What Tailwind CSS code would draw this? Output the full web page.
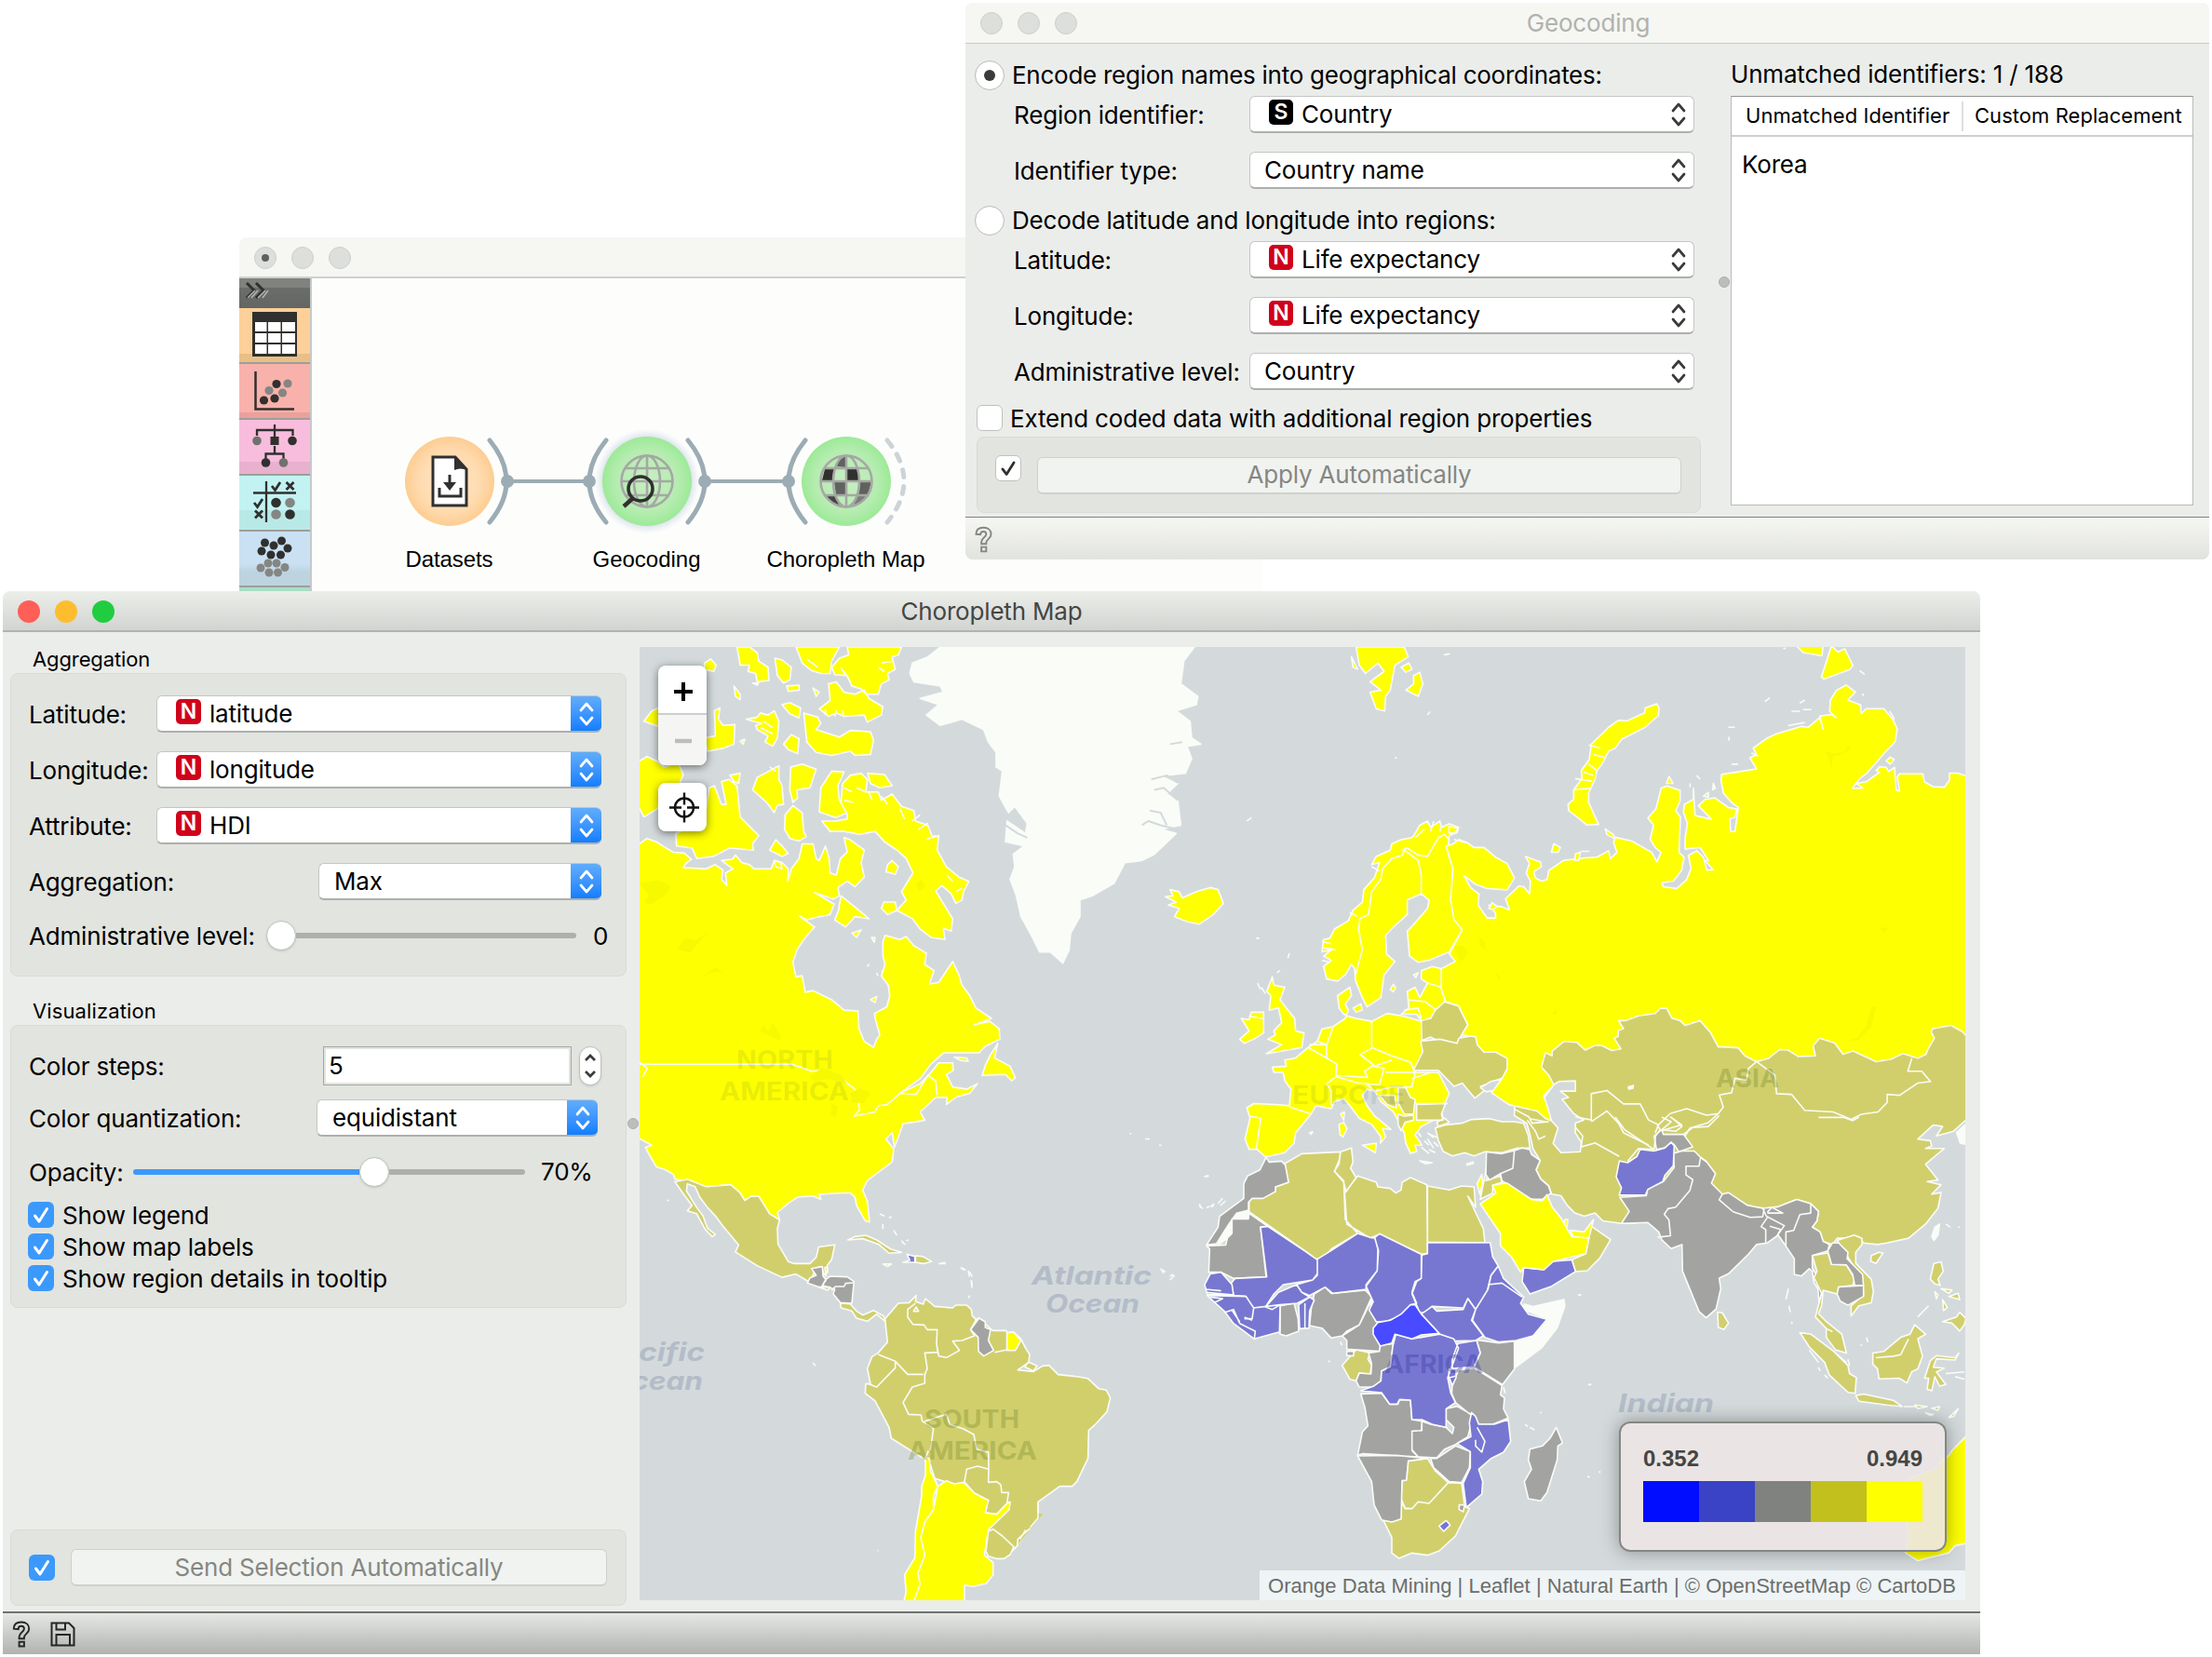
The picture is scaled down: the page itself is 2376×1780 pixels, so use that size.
<!DOCTYPE html>
<html lang="en">
<head>
<meta charset="utf-8">
<title>Choropleth Map</title>
<script src="https://cdn.jsdelivr.net/npm/@tailwindcss/browser@4"></script>
</head>
<body class="relative w-[2376px] h-[1780px] overflow-hidden bg-white text-black font-['Inter',sans-serif] text-[26px] leading-8 tracking-[-0.007em] whitespace-nowrap">

<!-- shared symbols -->
<svg class="absolute w-0 h-0" aria-hidden="true">
  <symbol id="chev" viewBox="0 0 20 28"><path d="M4 10l6-7 6 7M4 18l6 7 6-7" fill="none" stroke="currentColor" stroke-width="2.7" stroke-linecap="round" stroke-linejoin="round"/></symbol>
  <symbol id="check" viewBox="0 0 28 28"><path d="M7.500 15l4.500 6L20.500 7.500" fill="none" stroke="currentColor" stroke-width="3" stroke-linecap="round" stroke-linejoin="round"/></symbol>
  <symbol id="help" viewBox="0 0 20 30"><path d="M1.500 9C1.500 4 5 1.500 10 1.500S18.500 4.500 18.500 9c0 5-5.500 6-5.500 9.500V20H7.500v-2c0-5 5.500-5.500 5.500-9C13 7 12 6 10 6S6.500 7 6.500 9.500zM7.500 23.500H13v5H7.500z" fill="none" stroke="currentColor" stroke-width="2"/></symbol>
</svg>

<!-- workflow window -->
<section class="absolute left-[257px] top-[255px] w-[1100px] h-[382px] flex flex-col rounded-tl-lg overflow-hidden bg-[#fdfefc]">
  <header class="h-[44px] shrink-0 border-b-2 border-[#cfd1ce] bg-[#f6f7f3] flex items-center gap-4 pl-4 pt-px">
    <i class="size-6 rounded-full bg-[#dddfdc] border border-[#cdcfcc] flex items-center justify-center"><i class="size-2 rounded-full bg-[#5f605e]"></i></i>
    <i class="size-6 rounded-full bg-[#dddfdc] border border-[#cdcfcc]"></i>
    <i class="size-6 rounded-full bg-[#dddfdc] border border-[#cdcfcc]"></i>
  </header>
  <div class="flex flex-1">
    <nav class="w-[78px] border-r-2 border-[#c6c9ca] flex flex-col shrink-0">
      <div class="h-8 bg-linear-to-b from-[#80827f] from-30% via-[#6b6d6a] via-32% to-[#646663] shrink-0"><svg class="w-[76px] h-8" viewBox="0 0 76 32" fill="none" stroke-width="3"><path d="M8 5l8 8-8 8M18 5l8 8-8 8" stroke="#2f302e"/><path d="M9 21l8-8M13 21l7-8M20 21l8-8M25 21l6-8" stroke="#b3b4b2" stroke-width="1.500"/></svg></div>
      <div class="h-[60px] shrink-0 border-b-2 border-[#9c9f9a] bg-linear-to-b from-[#fdd099] from-85% to-[#e9bf86] to-85%"><svg class="w-[76px] h-[58px]" viewBox="0 0 76 58"><path d="M14 4h48v48H14z" fill="#30302e"/><path d="M17 15h12.500v10H17zM31 15h13.500v10H31zM46 15h14v10H46zM17 27h12.500v10H17zM31 27h13.500v10H31zM46 27h14v10H46zM17 39h12.500v10H17zM31 39h13.500v10H31zM46 39h14v10H46z" fill="#fff"/></svg></div>
      <div class="h-[60px] shrink-0 border-b-2 border-[#9c9f9a] bg-linear-to-b from-[#f9b1ab] from-90% to-[#eaa19c] to-90%"><svg class="w-[76px] h-[58px]" viewBox="0 0 76 58"><path d="M17.500 8v40.500H59" fill="none" stroke="#30302e" stroke-width="2.500"/><g fill="#30302e"><circle cx="26.500" cy="39" r="4.600"/><circle cx="38" cy="37" r="4.600"/><circle cx="40" cy="21.500" r="4.600"/></g><g fill="#858683"><circle cx="32" cy="28.500" r="4.600"/><circle cx="46.500" cy="31" r="4.600"/><circle cx="52" cy="21" r="4.600"/></g></svg></div>
      <div class="h-[60px] shrink-0 border-b-2 border-[#9c9f9a] bg-linear-to-b from-[#f8bddc] from-78% to-[#e8b1cd] to-78%"><svg class="w-[76px] h-[58px]" viewBox="0 0 76 58"><path d="M38 5v15M19 17v-6h38.500v6M38 28v9M28.500 42v-5.500h19V42" fill="none" stroke="#30302e" stroke-width="2.300"/><path d="M33.500 18h9v9h-9z" fill="#30302e"/><g fill="#30302e"><circle cx="57" cy="22.500" r="4.800"/><circle cx="28.500" cy="46" r="4.800"/></g><g fill="#70716e"><circle cx="19" cy="22.500" r="4.800"/><circle cx="47.500" cy="46" r="4.800"/></g></svg></div>
      <div class="h-[60px] shrink-0 border-b-2 border-[#9c9f9a] bg-linear-to-b from-[#c2f3f2] from-64% to-[#b9e9e7] to-64%"><svg class="w-[76px] h-[58px]" viewBox="0 0 76 58"><path d="M15 18.500h46M29 6v44" fill="none" stroke="#30302e" stroke-width="2.300"/><path d="M35 11l3.500 4.500L44 7M16 29l3.500 4.500L25 25M50.500 7l8 8M58.500 7l-8 8M17 37.500l8 8M25 37.500l-8 8" fill="none" stroke="#30302e" stroke-width="2.800"/><g fill="#30302e"><circle cx="39.500" cy="29" r="5.300"/><circle cx="54.500" cy="41.500" r="5.300"/></g><g fill="#858683"><circle cx="54.500" cy="29" r="5.300"/><circle cx="39.500" cy="41.500" r="5.300"/></g></svg></div>
      <div class="h-[60px] shrink-0 border-b-2 border-[#9c9f9a] bg-linear-to-b from-[#c9e1f3] from-60% to-[#bdd3e0] to-75%"><svg class="w-[76px] h-[58px]" viewBox="0 0 76 58"><g fill="#30302e"><circle cx="27.500" cy="12" r="4.500"/><circle cx="45.500" cy="10" r="4.500"/><circle cx="37" cy="15" r="4.500"/><circle cx="24" cy="21" r="4.500"/><circle cx="52" cy="18" r="4.500"/><circle cx="34" cy="25" r="4.500"/><circle cx="44.500" cy="25" r="4.500"/></g><g fill="#858683"><circle cx="31" cy="34" r="4.500"/><circle cx="40" cy="34" r="4.500"/><circle cx="23" cy="39" r="4.500"/><circle cx="49" cy="38.500" r="4.500"/><circle cx="32" cy="44" r="4.500"/><circle cx="41.500" cy="44" r="4.500"/></g></svg></div>
      <div class="flex-1 bg-[#a8dec7]"></div>
    </nav>
    <svg class="w-[1020px] h-[338px]" viewBox="335 299 1020 338">
      <defs>
        <radialGradient id="og"><stop offset="0" stop-color="#ffe9cf"/><stop offset=".7" stop-color="#ffdaae"/><stop offset="1" stop-color="#fdcd92"/></radialGradient>
        <radialGradient id="gg"><stop offset="0" stop-color="#c9eec4"/><stop offset=".7" stop-color="#b5ecb0"/><stop offset="1" stop-color="#9cea97"/></radialGradient>
        <radialGradient id="glow"><stop offset=".8" stop-color="#d3dbe6"/><stop offset="1" stop-color="#e6ebf2" stop-opacity="0"/></radialGradient>
        <g id="globe" fill="none" stroke="#a5a8a3" stroke-width="2.600"><circle r="27.500"/><ellipse rx="14" ry="27.500"/><path d="M0-27.500v55M-27.500 0h55M-24-14h48M-24 15h48"/></g>
      </defs>
      <g fill="none" stroke="#9cacb4" stroke-width="5" stroke-linecap="round"><path d="M526 473q36 44 0 88M651 473q-36 44 0 88M739 473q36 44 0 88M865 473q-36 44 0 88"/><path d="M544 517h89M757 517h90" stroke-width="4"/><path d="M953 473q36 44 0 88" stroke="#cdd3d6" stroke-dasharray="8 10"/></g>
      <g fill="#9cacb4"><circle cx="545" cy="517" r="7"/><circle cx="633" cy="517" r="7"/><circle cx="757" cy="517" r="7"/><circle cx="847" cy="517" r="7"/></g>
      <circle cx="695" cy="517" r="57" fill="url(#glow)"/>
      <circle cx="483" cy="517" r="48" fill="url(#og)"/><circle cx="695" cy="517" r="48" fill="url(#gg)"/><circle cx="909" cy="517" r="48" fill="url(#gg)"/>
      <path d="M465 491h24l12 13v39h-36z" fill="#fff" stroke="#30302e" stroke-width="3"/><path d="M488 490l14 15q-8-3-14 0z" fill="#30302e"/><path d="M483 510v10M472 524v9h23v-9" fill="none" stroke="#30302e" stroke-width="3"/><path d="M476 518h14l-7 9z" fill="#30302e"/>
      <use href="#globe" x="695" y="517"/><circle cx="688" cy="525" r="13" fill="none" stroke="#30302e" stroke-width="3.600"/><path d="M680 535l-10 9" stroke="#30302e" stroke-width="4.500"/>
      <path d="M886 504l6-2h5l-2 14h-12zM910 502h11l2 14h-13z" fill="#30302e"/><path d="M897 501l6-10 6-1v12zM896 518h13v13h-11zM923 518h13l-4 14h-10z" fill="#60625e"/><path d="M888 533h10l6 11q-11-2-16-11z" fill="#454643"/><path d="M921 533h9q-5 9-14 11z" fill="#7c7e7a"/>
      <use href="#globe" x="909" y="517"/>
      <g class="font-['Liberation_Sans',sans-serif] text-[24px] tracking-normal" text-anchor="middle"><text x="482.500" y="609" textLength="94">Datasets</text><text x="694.500" y="609" textLength="116">Geocoding</text><text x="908.500" y="609" textLength="170">Choropleth Map</text></g>
    </svg>
  </div>
</section>

<!-- geocoding window -->
<section class="absolute left-[1037px] top-[3px] w-[1336px] h-[598px] flex flex-col rounded-lg overflow-hidden bg-[#ebedea]">
  <header class="relative h-[44px] shrink-0 border-b border-[#c9cbc8] bg-[#f6f7f3] flex items-center gap-4 pl-4 pt-px">
    <i class="size-6 rounded-full bg-[#dddfdc] border border-[#cdcfcc]"></i><i class="size-6 rounded-full bg-[#dddfdc] border border-[#cdcfcc]"></i><i class="size-6 rounded-full bg-[#dddfdc] border border-[#cdcfcc]"></i>
    <h1 class="flex-1 text-center pr-[150px] pl-4 text-[#b0b2af]">Geocoding</h1>
  </header>
  <div class="flex h-[508px] shrink-0">
    <div class="w-[790px] shrink-0 pl-3">
      <div class="mt-[18px] h-8 flex items-center -ml-[2px]"><i class="size-8 rounded-full bg-white border border-[#b9bbb8] flex items-center justify-center"><i class="size-3 rounded-full bg-[#3b3c3a]"></i></i><span class="ml-[8px] -mt-px tracking-[-0.01em]">Encode region names into geographical coordinates:</span></div>
      <div class="mt-[6px] h-10 flex items-center pl-10"><span class="w-[253px] pt-[2px]">Region identifier:</span><div class="w-[478px] h-10 rounded-md bg-white border border-[#c4c6c3] border-b-2 border-b-[#adafac] flex items-center pl-5 pr-[6px]"><b class="w-[26px] h-[27px] rounded-[5px] bg-black text-white text-[23px] leading-[27px] text-center font-semibold -mt-1">S</b><span class="ml-[9px] flex-1">Country</span><svg class="w-5 h-8 text-[#3b3c3a]"><use href="#chev"/></svg></div></div>
      <div class="mt-5 h-10 flex items-center pl-10"><span class="w-[253px] pt-[2px]">Identifier type:</span><div class="w-[478px] h-10 rounded-md bg-white border border-[#c4c6c3] border-b-2 border-b-[#adafac] flex items-center pl-[15px] pr-[6px]"><span class="flex-1">Country name</span><svg class="w-5 h-8 text-[#3b3c3a]"><use href="#chev"/></svg></div></div>
      <div class="mt-[18px] h-8 flex items-center -ml-[2px]"><i class="size-8 rounded-full bg-white border border-[#b9bbb8]"></i><span class="ml-[8px] -mt-px">Decode latitude and longitude into regions:</span></div>
      <div class="mt-[6px] h-10 flex items-center pl-10"><span class="w-[253px] pt-[2px]">Latitude:</span><div class="w-[478px] h-10 rounded-md bg-white border border-[#c4c6c3] border-b-2 border-b-[#adafac] flex items-center pl-5 pr-[6px]"><b class="w-[26px] h-[27px] rounded-[5px] bg-[#d0021b] text-white text-[23px] leading-[27px] text-center font-semibold -mt-1">N</b><span class="ml-[9px] flex-1">Life expectancy</span><svg class="w-5 h-8 text-[#3b3c3a]"><use href="#chev"/></svg></div></div>
      <div class="mt-5 h-10 flex items-center pl-10"><span class="w-[253px] pt-[2px]">Longitude:</span><div class="w-[478px] h-10 rounded-md bg-white border border-[#c4c6c3] border-b-2 border-b-[#adafac] flex items-center pl-5 pr-[6px]"><b class="w-[26px] h-[27px] rounded-[5px] bg-[#d0021b] text-white text-[23px] leading-[27px] text-center font-semibold -mt-1">N</b><span class="ml-[9px] flex-1">Life expectancy</span><svg class="w-5 h-8 text-[#3b3c3a]"><use href="#chev"/></svg></div></div>
      <div class="mt-5 h-10 flex items-center pl-10"><span class="w-[253px] pt-[2px]">Administrative level:</span><div class="w-[478px] h-10 rounded-md bg-white border border-[#c4c6c3] border-b-2 border-b-[#adafac] flex items-center pl-[15px] pr-[6px]"><span class="flex-1">Country</span><svg class="w-5 h-8 text-[#3b3c3a]"><use href="#chev"/></svg></div></div>
      <div class="mt-4 h-7 flex items-center"><i class="size-7 rounded-md bg-white border border-[#bfc1be]"></i><span class="ml-[8px] pt-px">Extend coded data with additional region properties</span></div>
      <div class="mt-[6px] h-[82px] w-[778px] rounded-lg border border-[#d9dbd8] bg-[#e2e4df] flex items-start pl-[19px]"><i class="mt-[19px] size-7 rounded-md bg-white border border-[#bfc1be] text-[#2f302e]"><svg class="size-[26px]"><use href="#check"/></svg></i><div class="mt-[21px] ml-[17px] w-[692px] h-10 rounded-md bg-[#f1f3f0] border border-[#cfd1ce] border-b-2 text-center leading-9 text-[#858783]">Apply Automatically</div></div>
    </div>
    <div class="w-[32px] shrink-0 pl-[19px] pt-[250px]"><i class="block size-3 rounded-full bg-[#bcbebb] border border-[#adafac]"></i></div>
    <div class="w-[497px]">
      <div class="mt-[17px] h-8">Unmatched identifiers: 1 / 188</div>
      <div class="mt-[7px] h-[440px] w-[497px] bg-white border border-[#b9bbb8] border-t-[#929491]">
        <div class="h-[43px] border-b-2 border-[#cdcfcc] flex items-center text-[22px] tracking-[0.002em]"><span class="w-[249px] h-8 pl-[15px] border-r-2 border-[#dddfdc] leading-[30px]">Unmatched Identifier</span><span class="pl-[12px] h-8 leading-[30px]">Custom Replacement</span></div>
        <div class="mt-[14px] pl-[11px]">Korea</div>
      </div>
    </div>
  </div>
  <footer class="flex-1 border-t border-[#7f817e] bg-linear-to-b from-[#f6f7f3] to-[#e1e3de] pl-[10px] pt-[9px] text-[#858783]"><svg class="w-[19px] h-[29px]"><use href="#help"/></svg></footer>
</section>

<!-- choropleth window -->
<section class="absolute left-[3px] top-[635px] w-[2124px] h-[1142px] flex flex-col rounded-t-lg overflow-hidden bg-[#ebedea]">
  <header class="h-[44px] shrink-0 border-b-2 border-[#b1b3b0] bg-linear-to-b from-[#eceeea] to-[#d2d4d1] flex items-center gap-4 pl-4 pt-[2px]">
    <i class="size-6 rounded-full bg-[#fe5f57]"></i><i class="size-6 rounded-full bg-[#febd2e]"></i><i class="size-6 rounded-full bg-[#20cd40]"></i>
    <h1 class="flex-1 text-center pr-[148px] pl-3 text-[#454643]">Choropleth Map</h1>
  </header>
  <div class="flex h-[1052px] shrink-0">
    <div class="w-[670px] shrink-0 pl-2">
      <h2 class="mt-[14px] pl-[24px] text-[22px] leading-[30px] tracking-[-0.005em]">Aggregation</h2>
      <div class="w-[662px] h-[326px] rounded-lg border border-[#d9dbd8] bg-[#e2e4df] pt-[23px] pl-[19px]">
        <div class="h-10 flex items-center"><span class="w-[137px] pt-[2px]">Latitude:</span><div class="w-[478px] h-10 rounded-md bg-white border border-r-0 border-[#c4c6c3] border-b-2 border-b-[#adafac] flex items-center pl-[20px] overflow-hidden"><b class="w-[27px] h-[27px] rounded-[5px] bg-[#d0021b] text-white text-[23px] leading-[27px] text-center font-semibold -mt-1">N</b><span class="ml-[9px] flex-1">latitude</span><i class="w-[33px] h-10 bg-linear-to-b from-[#62aefb] to-[#067bff] text-white flex items-center justify-center"><svg class="w-5 h-8"><use href="#chev"/></svg></i></div></div>
        <div class="mt-5 h-10 flex items-center"><span class="w-[137px] pt-[2px]">Longitude:</span><div class="w-[478px] h-10 rounded-md bg-white border border-r-0 border-[#c4c6c3] border-b-2 border-b-[#adafac] flex items-center pl-[20px] overflow-hidden"><b class="w-[27px] h-[27px] rounded-[5px] bg-[#d0021b] text-white text-[23px] leading-[27px] text-center font-semibold -mt-1">N</b><span class="ml-[9px] flex-1">longitude</span><i class="w-[33px] h-10 bg-linear-to-b from-[#62aefb] to-[#067bff] text-white flex items-center justify-center"><svg class="w-5 h-8"><use href="#chev"/></svg></i></div></div>
        <div class="mt-5 h-10 flex items-center"><span class="w-[137px] pt-[2px]">Attribute:</span><div class="w-[478px] h-10 rounded-md bg-white border border-r-0 border-[#c4c6c3] border-b-2 border-b-[#adafac] flex items-center pl-[20px] overflow-hidden"><b class="w-[27px] h-[27px] rounded-[5px] bg-[#d0021b] text-white text-[23px] leading-[27px] text-center font-semibold -mt-1">N</b><span class="ml-[9px] flex-1">HDI</span><i class="w-[33px] h-10 bg-linear-to-b from-[#62aefb] to-[#067bff] text-white flex items-center justify-center"><svg class="w-5 h-8"><use href="#chev"/></svg></i></div></div>
        <div class="mt-5 h-10 flex items-center"><span class="w-[311px] pt-[2px]">Aggregation:</span><div class="w-[304px] h-10 rounded-md bg-white border border-r-0 border-[#c4c6c3] border-b-2 border-b-[#adafac] flex items-center pl-4 overflow-hidden"><span class="flex-1">Max</span><i class="w-[33px] h-10 bg-linear-to-b from-[#62aefb] to-[#067bff] text-white flex items-center justify-center"><svg class="w-5 h-8"><use href="#chev"/></svg></i></div></div>
        <div class="mt-[22px] h-8 flex items-center"><span class="w-[255px] pt-[2px]">Administrative level:</span><i class="size-8 rounded-full bg-white border border-[#bfc1be] shadow-sm"></i><i class="w-[301px] h-[6px] rounded-r-full bg-[#aeb0ad]"></i><span class="ml-[18px] pt-px">0</span></div>
      </div>
      <h2 class="mt-[22px] pl-[24px] text-[22px] leading-[30px] tracking-[0.005em]">Visualization</h2>
      <div class="w-[662px] h-[304px] rounded-lg border border-[#d9dbd8] bg-[#e2e4df] pt-[22px] pl-[19px]">
        <div class="h-[42px] flex items-center"><span class="w-[316px] pt-[2px]">Color steps:</span><div class="w-[267px] h-[42px] bg-white border border-[#a5a7a4] ring-2 ring-inset ring-[#e2e4df] pl-[5px] leading-[40px]">5</div><i class="ml-2 w-6 h-[42px] rounded-full bg-white border border-[#bfc1be] text-[#3b3c3a] flex items-center justify-center shadow-sm"><svg class="w-4 h-8" viewBox="0 0 16 32" fill="none" stroke="currentColor" stroke-width="2.700"><path d="M3 10l5-5 5 5M3 22l5 5 5-5"/></svg></i></div>
        <div class="mt-[15px] h-10 flex items-center"><span class="w-[309px] pt-[2px]">Color quantization:</span><div class="w-[302px] h-10 rounded-md bg-white border border-r-0 border-[#c4c6c3] border-b-2 border-b-[#adafac] flex items-center pl-4 overflow-hidden"><span class="flex-1">equidistant</span><i class="w-[33px] h-10 bg-linear-to-b from-[#62aefb] to-[#067bff] text-white flex items-center justify-center"><svg class="w-5 h-8"><use href="#chev"/></svg></i></div></div>
        <div class="mt-[22px] h-8 flex items-center"><span class="w-[112px] pt-px">Opacity:</span><i class="w-[243px] h-[6px] rounded-l-full bg-[#3b99fc]"></i><i class="size-8 rounded-full bg-white border border-[#bfc1be] shadow-sm"></i><i class="w-[146px] h-[6px] rounded-r-full bg-[#aeb0ad]"></i><span class="ml-[17px]">70%</span></div>
        <div class="mt-[16px] -ml-px h-7 flex items-center"><i class="size-7 rounded-md bg-[#3b99fc] text-white"><svg class="size-7"><use href="#check"/></svg></i><span class="ml-[9px] pt-px">Show legend</span></div>
        <div class="mt-[6px] -ml-px h-7 flex items-center"><i class="size-7 rounded-md bg-[#3b99fc] text-white"><svg class="size-7"><use href="#check"/></svg></i><span class="ml-[9px] pt-px">Show map labels</span></div>
        <div class="mt-[6px] -ml-px h-7 flex items-center"><i class="size-7 rounded-md bg-[#3b99fc] text-white"><svg class="size-7"><use href="#check"/></svg></i><span class="ml-[9px] pt-px">Show region details in tooltip</span></div>
      </div>
      <div class="mt-[238px] w-[662px] h-[82px] rounded-lg border border-[#d9dbd8] bg-[#e2e4df] flex items-center pl-[19px]"><i class="size-7 rounded-md bg-[#3b99fc] text-white"><svg class="size-7"><use href="#check"/></svg></i><div class="ml-[17px] w-[576px] h-10 rounded-md bg-[#f1f3f0] border border-[#cfd1ce] border-b-2 text-center leading-[38px] text-[#858783]">Send Selection Automatically</div></div>
    </div>
    <div class="w-[14px] shrink-0 pl-px pt-[522px]"><i class="block size-3 rounded-full bg-[#bcbebb] border border-[#adafac]"></i></div>
    <main class="relative mt-4 w-[1424px] h-[1024px] overflow-hidden bg-[#d4dadc]">
      <svg class="w-[1424px] h-[1024px] [&_path]:[vector-effect:non-scaling-stroke]" viewBox="687 695 1424 1024" stroke="#fafcf8" stroke-width="1.600" stroke-linejoin="round">
        <!-- Greenland -->
        <g transform="translate(680 690) scale(.333333 .446429)">
          <path fill="#fafcf8" d="M1010,0 950,35 900,50 892,75 905,95 990,105 1000,120 925,135 985,150 945,175 990,200 1060,185 1130,210 1145,240 1170,265 1170,300 1190,310 1180,370 1210,410 1230,395 1270,435 1265,460 1205,430 1200,480 1260,490 1225,510 1230,540 1215,570 1235,610 1250,660 1280,700 1310,745 1345,745 1385,772 1405,740 1410,700 1440,660 1440,620 1480,610 1550,580 1585,530 1640,525 1680,510 1750,460 1700,450 1765,440 1755,380 1720,365 1755,340 1700,322 1780,315 1800,280 1785,250 1830,245 1800,230 1795,190 1750,165 1815,150 1820,130 1765,100 1775,45 1820,0z"/>
          <path fill="none" stroke="#d4dadc" stroke-width="2" d="M1640,440 1660,430 1700,440 1765,452M1665,405 1700,410 1720,440M1680,355 1710,350 1755,380M1670,330 1720,320 1755,338M1730,245 1770,240M1200,440 1240,460 1270,470"/>
        </g>
        <!-- Canada and United States -->
        <g transform="translate(680 690) scale(.333333 .446429)" fill="#feff00">
          <path d="M10,490 45,472 75,480 100,492 130,505 165,507 188,522 170,532 162,542 235,545 265,535 290,548 285,570 302,585 298,555 322,545 285,525 320,522 330,512 350,530 375,535 390,545 445,545 455,525 480,530 500,545 498,575 510,545 535,520 545,485 580,485 590,520 600,525 620,490 632,520 635,555 655,560 668,520 690,505 680,470 700,475 745,500 735,530 745,565 715,588 690,575 660,590 665,610 645,618 585,602 648,630 635,655 590,662 560,668 535,658 585,685 555,710 528,740 515,770 525,805 545,802 555,842 580,838 640,860 680,885 725,887 728,930 745,960 775,975 785,955 795,945 780,905 778,893 818,877 827,850 822,825 800,803 812,775 805,755 805,720 812,705 860,715 880,708 905,730 945,748 940,775 970,790 955,822 985,818 1030,768 1050,800 1060,825 1085,850 1105,880 1155,905 1100,920 1150,912 1180,930 1182,955 1135,972 1115,988 1000,988 960,1015 925,1050 860,1085 925,1062 960,1035 985,1012 1030,1012 1032,1030 1010,1040 1030,1070 1075,1075 1110,1062 1085,1085 1040,1095 1010,1112 1012,1095 975,1095 925,1130 940,1150 900,1155 870,1158 855,1190 842,1215 835,1180 815,1195 840,1220 835,1250 800,1270 755,1295 740,1318 755,1345 762,1395 748,1392 720,1355 715,1335 700,1325 675,1325 600,1328 605,1340 580,1332 530,1335 500,1350 465,1372 472,1390 440,1375 405,1333 380,1333 360,1343 345,1325 315,1305 235,1310 175,1295 135,1292 130,1280 100,1268 75,1262 50,1230 40,1215 60,1210 10,1190z"/>
          <path fill="none" d="M21,1015 510,1015 550,1025 575,1032 625,1030 680,1055 722,1080 730,1125 712,1140 780,1130 790,1115 820,1112 860,1085 912,1088 950,1042 975,1055 980,1090M21,1010l25,15-15,20"/>
          <path d="M1175,965 1165,1000 1190,1010 1215,1020 1232,1048 1220,1055 1200,1040 1125,1042 1135,1018 1150,995zM1035,998 1075,1000 1080,1008 1055,1006z"/>
          <path d="M10,290 45,275 75,285 100,300 145,290 162,318 150,340 90,345 80,400 35,420 10,385zM60,165 90,155 90,205 35,190zM230,50 250,40 268,55 260,70 230,65zM262,165 280,158 275,185 290,200 328,198 325,245 290,255 240,262 230,230 265,225zM245,350 262,345 285,390 300,390 285,335 310,330 335,345 345,420 405,465 385,485 388,500 310,495 260,515 205,520 190,495 140,490 138,460 230,430zM312,320 345,315 340,340 325,335zM345,238l15,-5 -5,12z"/>
          <path d="M335,11 375,11 400,25 405,45 435,60 438,92 400,95 395,75 370,70 375,55 345,55zM457,38 480,42 510,60 505,90 485,98 465,80zM525,11 665,11 640,45 635,75 605,75 575,68 545,50zM325,105 345,125 345,138 330,130zM495,105 535,103 535,115 500,118zM580,110 600,120 590,130zM385,98l20,0 -5,5z"/>
          <path d="M640,60 665,38 695,30 690,11 865,11 855,30 835,35 845,65 820,75 825,90 800,100 790,125 750,125 735,112 705,105 690,80 650,78zM600,160 635,140 630,100 655,95 680,120 715,125 745,115 760,135 805,155 800,175 755,192 745,175 680,178 655,170 630,178zM480,150 505,145 540,158 535,182 505,172zM550,170 595,180 605,195 590,210 665,228 700,212 765,215 775,235 765,270 715,272 700,262 640,272 590,265 560,240z"/>
          <path d="M365,185 400,180 410,170 435,175 455,165 470,190 465,230 450,250 425,240 435,225 400,210 395,200 415,195 385,190zM485,245 510,222 535,232 530,268 500,258zM400,325 470,297 470,330 480,345 485,390 465,392 455,410 430,385 385,355zM508,300 545,293 590,305 570,350 528,355 530,375 515,385 505,355zM490,415 515,393 545,410 550,455 558,468 535,478 505,472 488,450zM440,500 460,475 480,490 500,508 480,515zM455,525 475,530 480,545 460,540z"/>
          <path d="M605,350 640,310 680,312 660,345 665,380 688,410 655,422 600,408zM608,430 650,430 690,425 690,415 670,385 675,340 700,320 735,315 755,330 750,360 790,360 800,380 835,365 865,395 905,405 910,430 950,440 965,470 985,465 980,500 1010,540 1050,565 1082,575 1065,600 1060,620 1040,628 1025,605 995,585 975,598 1030,665 1025,695 1000,688 1005,715 960,710 925,690 900,665 850,645 880,620 865,600 902,555 880,520 850,500 810,480 780,455 730,462 680,455 635,455zM755,315 810,318 835,345 795,350 765,340zM820,535 835,525 855,540 845,558 815,552zM808,625 845,625 850,645 820,655 800,640zM670,610 720,640 760,665 715,660 685,685 650,668 662,645zM705,700 735,692 720,710zM768,710l12,0 -3,12zM765,860l20,-8 -5,15z"/>
          <path fill="none" d="M560,40l35,20M670,60l15,20M700,95l-20,-25M760,360l10,20M720,350l30,10M680,380l30,5M680,350l25,10M800,370l20,20M860,400l15,25M900,430l25,-15M920,450l30,-15M945,475l30,-10M620,175l0,-15M650,178l5,-15M680,180l-5,-15M800,50l40,-5M810,70l-20,-10M410,205l40,15M420,190l30,15M440,300l20,10M1040,600l20,-8M1010,560l20,15"/>
          <path fill="#d1cf6c" d="M135,1298 175,1292 235,1310 315,1305 345,1325 360,1343 380,1333 405,1333 440,1375 472,1390 465,1410 467,1448 500,1490 520,1495 570,1495 590,1480 598,1455 650,1450 640,1485 625,1500 628,1515 615,1522 608,1502 590,1505 570,1540 525,1520 480,1528 400,1500 330,1467 340,1450 290,1405 265,1380 240,1360 215,1335 200,1310 175,1303 172,1320 205,1360 225,1380 240,1410 265,1425 255,1430 232,1412 205,1375 175,1368 190,1355 160,1325zM692,1438 715,1430 750,1427 785,1438 830,1460 865,1468 825,1470 790,1448 740,1435zM910,1476 935,1478 962,1490 935,1495 910,1492zM805,1496 832,1496 820,1502z"/>
          <path fill="#7777d2" d="M882,1472 908,1478 908,1492 870,1492 892,1487z"/>
          <path fill="none" d="M795,1375l15,6M805,1400v12M825,1385l8,-3M840,1415l10,12M865,1440l12,10M880,1440l8,-2M985,1495h22M1060,1505l12,6M1085,1515l8,12M1090,1540l3,8M110,1343h6M755,780l6,-6M785,795l4,8M800,790h5"/>
          <g fill="#f7f900" stroke="none"><path d="M21,580l60,-8 40,15 -15,20 -50,25 -20,-8 15,-15z M140,740l30,-30 30,8 40,-20 -35,30 -20,18zM410,935l10,-15 15,15 15,-20 25,30 0,15zM220,805l45,-22 25,8 -40,5zM570,1045l40,-22 60,18 20,22 -60,-12 -45,6zM640,1110l20,5 -5,28 -18,-5zM700,1085l30,-12 35,10 -20,25 -40,0zM910,580l20,-8 15,15 -25,12z"/></g>
        </g>
        <!-- Central and South America -->
        <g transform="translate(860 1340) scale(.333333)" fill="#d1cf6c">
          <path fill="#a3a4a1" d="M35,68 70,62 72,92 82,105 65,130 22,115 30,98 50,90zM82,102 95,93 150,95 172,110 165,180 128,178 105,150 110,135 70,122z"/><path fill="none" d="M100,138l12,-12 28,0 5,-10 25,-2"/>
          <path d="M60,128l35,0 -8,10zM128,180 160,182 180,205 200,218 235,203 268,222 272,238 245,215 215,238 180,228 165,205 130,195zM78,65l8,0 -5,28z"/>
          <path d="M272,230 315,180 350,178 372,155 370,175 395,183 402,165 432,190 490,195 500,186 535,186 550,200 553,220 565,232 575,228 612,262 620,268 662,268 665,275 685,272 710,295 725,325 738,345 735,370 700,395 750,400 780,382 800,380 830,410 880,415 925,422 960,455 985,460 998,485 987,530 950,570 928,590 926,680 890,755 875,770 835,770 765,820 765,872 735,910 690,970 655,1003 605,995 595,960 600,900 668,822 420,740 400,683 292,615 285,580 240,495 208,470 210,440 225,440 215,390 230,352 250,340 280,305 275,262z"/>
          <path fill="none" d="M370,180 345,200 345,225 362,248 398,250 408,265 440,265 438,310 445,350 470,355 512,332 490,302 520,300 560,285 548,265 567,230M438,310l4,28 -42,2 8,50 -8,20 0,28 -40,12 -30,50 18,38 40,2 4,20 36,24 -10,70M250,345l55,22 40,42 50,0M305,370l0,18 -60,62 -25,-10M400,560 470,538 480,570 525,585 558,603 567,650 605,660 606,715M412,655 400,683M418,700 440,768M372,192l8,14 -16,0zM665,275v55l-40,8"/>
          <path d="M610,905 668,822 780,860 690,970z" stroke="none"/>
          <path d="M605,915 620,908 650,930 687,965 675,990 655,1003 630,1003 605,995 597,980zM528,755 535,715 570,705 606,715 605,757 632,755 645,765 648,790 670,790 665,825 632,860 595,855 605,815 560,792z"/>
          <path fill="none" d="M740,905 700,940 698,962 687,972M765,820v52l-25,30"/>
          <path d="M722,385 735,370 762,382 750,398z"/>
          <path fill="#a3a4a1" d="M575,228 595,240 595,258 612,265 605,300 622,332 590,350 573,335 572,290 548,265z"/>
          <path fill="#feff00" d="M665,275 685,272 710,300 692,332 665,332zM402,678 415,680 418,720 442,770 428,800 428,845 400,885 387,935 400,992 378,1050 385,1085 365,1140 333,1140 340,1110 335,1055 368,1000 370,915 390,800 390,770 402,735zM442,770 470,752 495,762 525,757 560,792 605,815 595,855 632,860 665,825 675,820 672,845 605,910 592,992 620,1015 620,1055 598,1083 555,1093 528,1088 528,1140 365,1140 385,1085 378,1050 400,992 387,935 400,885 428,845z"/>
          <g fill="none" stroke="#fafcf8"><path d="M515,65l12,8M540,75l4,20M550,105l2,25M545,155l-4,8M455,50h12M40,372l8,10M1160,68l10,15M1190,105l15,-15M247,977h3M725,910l-18,30"/></g>
        </g>
        <!-- Asia -->
        <g transform="translate(1680 1200) scale(.333333 .33801)">
          <path fill="#d1cf6c" d="M-150,-400 -160,-5 -120,20 -110,55 -100,100 -77,138 -90,168 -75,197 -50,217 -40,245 -10,250 10,280 35,305 65,315 100,305 125,330 185,338 230,338 300,250 450,250 525,245 600,285 650,290 690,285 750,262 795,275 820,300 815,330 800,350 825,365 835,395 865,405 880,385 910,385 950,380 965,400 1010,405 1040,400 1110,385 1165,340 1205,290 1215,240 1185,245 1215,215 1170,205 1205,200 1165,150 1215,108 1225,100 1165,100 1185,92 1180,75 1140,70 1190,25 1220,30 1200,60 1255,45 1300,5 1300,-400z"/>
          <path fill="#fafcf8" stroke="none" d="M1262,48 1300,15 1300,90 1275,85z"/>
          <path fill="#a3a4a1" d="M185,338 210,300 180,255 265,250 270,225 320,205 355,160 352,115 380,108 420,108 440,128 460,143 488,180 475,210 510,245 530,240 590,280 640,290 690,285 750,262 795,275 820,300 815,330 800,350 825,365 835,395 855,405 850,425 800,440 800,480 815,505 830,560 822,590 818,545 805,525 800,490 790,482 765,505 742,500 742,450 715,410 690,375 655,400 620,405 595,435 530,498 500,512 505,545 490,610 458,638 435,618 382,490 380,405 345,418 315,390 305,365 270,335zM290,60 315,40 320,55 385,55 415,95 370,110 355,88 345,80 325,98 298,103z"/>
          <path fill="none" d="M440,128l-5,28 -42,0 0,28 22,15 -10,35 -45,52 -25,5 -12,18 15,18 5,50 -42,5M510,245l-10,18 45,38 55,18 40,-2 5,-25M640,290l12,25 58,30 -22,30 10,-18 -35,-10M650,400l0,-42 -15,-10 20,-28M655,302l15,-15 35,18 -50,0M795,275l0,30 -35,5 -20,50 -25,5 0,45M178,140l12,2"/>
          <path fill="#7777d2" d="M178,140 205,145 235,125 245,103 290,108 325,98 345,80 355,92 352,155 325,185 318,205 270,230 262,248 178,248 185,225 168,190z"/>
          <path fill="#d1cf6c" d="M800,440 850,432 862,468 890,465 910,470 937,515 930,535 885,540 880,562 835,550 830,600 820,625 845,650 870,670 895,690 910,750 875,740 845,700 845,672 810,635 822,590 830,560 805,510 815,490zM880,392 935,375 960,385 960,405 940,430 940,465 990,515 997,555 990,590 950,600 925,632 925,600 965,565 962,520 915,445z"/>
          <path fill="#a3a4a1" d="M850,425 865,400 885,400 915,430 912,450 962,500 965,535 937,535 930,500 910,470 862,468zM880,562 885,540 965,535 965,570 915,598 890,585z"/>
          <path fill="#d1cf6c" d="M495,620 510,622 530,655 515,675 497,668zM990,440 1015,430 1028,432 1005,465 988,458zM1192,465 1215,460 1222,490 1205,515 1212,535 1195,530 1180,515zM760,685 795,690 870,745 915,790 920,815 942,828 938,878 915,875 855,820 840,780 790,730zM940,885 965,880 1060,900 1090,920 1040,915 950,903zM995,750 1030,745 1085,700 1115,690 1130,660 1165,690 1140,705 1155,760 1140,800 1120,810 1105,845 1080,830 1015,832 1010,800 995,785zM1180,775 1200,758 1260,765 1272,750 1260,772 1200,768 1190,795 1225,798 1200,810 1230,850 1210,855 1195,825 1185,870 1170,865 1175,830 1162,830zM1220,650 1265,635 1275,620 1295,640 1290,660 1275,680 1250,655zM1240,570l30,-10 5,20zM1215,545l35,5 -10,10zM1195,555l10,10 -5,12zM1220,580l15,25 -12,10zM1130,915l40,5 -30,6zM1185,925l25,-5 -5,12zM1240,955l30,-28 -15,25z"/>
          <path fill="none" d="M1005,765l55,-5 25,-5 25,-50M845,672l20,10"/>
          <path fill="#fafcf8" d="M1185,380 1195,350 1210,340 1205,375 1192,392zM1165,940l25,5 -10,3z"/>
          <path fill="none" stroke="#fafcf8" d="M715,580l8,-35M725,600l4,20M733,650l2,8M1140,635l35,-35M790,740l30,40M820,795l5,12M840,820l10,10M955,725h6M975,700l4,15M880,755l30,25M915,770l5,20M1230,340l15,10M1270,350h5M1095,920l40,0M1230,815l60,-5M1260,825l30,8M75,1143l8,0M115,1125v6M78,850h8M45,565h10"/>
          <path fill="#feff00" d="M1295,1015 1250,1060 1240,1075 1220,1090 1200,1115 1110,1150 1090,1230 1110,1330 1100,1385 1140,1410 1240,1385 1260,1362 1295,1355z"/>
          <path fill="none" d="M-110,5 -60,15M440,128l22,15M55,95 100,82 178,125M35,30 60,60 55,95M205,140l35,-40 50,3 5,-43 15,-20 -10,-15M165,0l30,40 75,50 20,13M315,40l30,-25 -30,-15M315,40l45,5 20,-15 -35,-30M385,55l30,-22 50,-3 35,-35M820,1h80l30,10 20,-10"/>
        </g>
        <!-- Europe -->
        <g transform="translate(1120 690) scale(.333333 .446429)" fill="#feff00">
          <path d="M905,715 925,712 940,690 985,670 1000,645 1030,625 1035,595 1070,565 1085,530 1060,535 1075,515 1120,500 1125,485 1155,475 1190,470 1200,460 1215,440 1240,430 1250,445 1280,430 1285,445 1310,437 1340,445 1335,458 1310,465 1305,505 1322,545 1315,620 1335,655 1352,692 1310,745 1245,765 1210,770 1182,755 1175,695 1200,675 1240,640 1245,620 1220,605 1175,620 1175,655 1130,685 1105,705 1108,750 1135,768 1100,800 1090,855 1045,877 1030,855 1008,815 1005,785 995,775 975,800 950,815 915,810 905,780 930,765 905,755 930,740 900,745z"/>
          <path fill="none" d="M1008,800 1030,740 1018,690 1022,665 1050,655 1060,600 1090,570 1095,545 1125,520 1160,512 1165,500 1210,525 1220,560 1220,605M1155,500 1175,495 1210,512 1240,515 1275,470 1295,462 1310,475 1305,505M900,720l30,5M905,735l40,5M900,765l25,5M1060,540l25,10M990,650l25,10M1200,470l30,-20M1250,455l10,-25M1280,455l5,-15"/>
          <path d="M1220,912 1165,900 1110,893 1060,912 1010,905 985,900 970,895 955,880 950,850 990,830 995,850 975,870 985,885 975,905 935,925 900,930 885,960 855,975 815,1000 780,1005 785,1020 740,1022 745,1035 775,1035 780,1055 800,1075 795,1115 750,1112 680,1110 658,1120 668,1145 652,1195 665,1220 690,1220 718,1238 780,1228 810,1205 815,1180 865,1135 880,1115 930,1122 940,1105 970,1098 990,1115 1020,1145 1060,1160 1090,1190 1088,1205 1105,1190 1095,1170 1122,1172 1070,1140 1045,1115 1030,1090 1045,1075 1070,1080 1090,1105 1130,1130 1145,1150 1165,1180 1170,1205 1185,1230 1205,1225 1200,1210 1222,1210 1200,1185 1220,1165 1260,1150 1290,1145 1285,1130 1310,1085 1275,1035 1195,1035 1225,985z"/>
          <path fill="none" d="M795,1118 865,1135M668,1140l35,5 -15,75M855,975 910,998 948,1015 945,1045 915,1062 930,1080 930,1115M860,968h55l0,35M885,960l30,8 20,-40M1060,912l0,65 -38,15 45,25 -30,15 10,15 -100,-5M1060,975l65,20 60,15 15,25M1025,992l45,28 55,-15M945,1045l70,15 70,5 15,-40 -35,-5M1040,1060l30,20 55,-10 65,0 10,-35 -95,0M1190,1050l60,-15M1170,1070l15,35 20,5M1205,1110h100"/>
          <path fill="#d1cf6c" d="M1085,1090 1135,1090 1140,1120 1110,1112zM1145,1072 1170,1072 1185,1095 1200,1100 1195,1135 1165,1135 1145,1108zM1205,1112 1298,1110 1285,1135 1290,1150 1240,1150 1205,1150zM1145,1135 1165,1140 1195,1138 1195,1150 1168,1155 1155,1175 1145,1160zM1270,1155 1295,1145 1310,1155 1275,1165z"/>
          <path d="M1030,1210 1075,1205 1072,1228zM955,1160 970,1155 980,1170 968,1190 958,1185zM960,1135l12,-5 -2,20zM1215,1248l40,4 -20,3zM860,1180l10,-2 -5,6zM1120,835l10,-12 8,8 -8,10zM1195,800l15,-5 -8,12zM1000,880l25,-10 5,15 -20,5z"/>
          <path d="M740,805 722,840 735,850 730,885 760,880 770,915 745,935 750,945 725,955 770,968 720,990 760,985 835,975 842,940 815,935 812,905 785,880 765,860 780,830 745,825zM640,905 665,908 672,890 712,890 712,940 680,955 650,965 635,955 665,935zM395,612 420,610 410,595 440,600 450,615 480,605 495,600 540,590 565,595 582,628 550,655 505,678 465,672 425,660 440,640 405,632 430,625z"/>
          <path fill="none" d="M665,900l45,5M705,830l12,15M692,820l10,15M790,760l5,-12M755,795l10,-5M688,712h10M658,430l15,-8M1240,175l8,-8M1135,278h6M280,1182h6M330,1195h15M375,1210h8M525,1285h10M505,1355l10,8M540,1358l10,-6M565,1350l15,-12M1210,1180l10,10M1230,1200l15,10M1240,1180l20,12M1220,1215l25,15M1365,1255l25,-5M385,1510l10,5M410,1525l12,-4"/>
          <path d="M1220,790 1255,780 1285,785 1285,835 1298,865 1265,890 1245,908 1220,910 1205,895 1155,895 1180,880 1175,840 1200,830 1215,855 1240,820 1220,810z"/><path fill="none" d="M1240,820l45,10M1178,860l55,5 35,20M1165,885l45,-5 10,25"/>
          <path fill="#d1cf6c" d="M1220,910 1250,905 1265,885 1295,865 1340,875 1370,920 1350,945 1335,965 1285,962 1250,950 1222,958z"/>
          <path d="M1010,11 1165,11 1178,35 1135,55 1120,115 1105,130 1102,165 1075,160 1055,120 1090,115 1055,95 1100,70 1080,50 1040,75 1020,55zM1155,60 1180,50 1190,65 1170,72zM1195,80 1215,72 1225,100 1210,130 1170,115 1195,100zM995,35l20,30 -15,-5zM1295,30l15,-2z"/>
        </g>
        <!-- Russia, Ukraine, inland seas -->
        <g transform="translate(1560 690) scale(.357143 .344388)" fill="#feff00">
          <path fill="#d4dadc" d="M305,1380 320,1370 370,1368 370,1400 325,1400 350,1420 330,1425 365,1470 395,1490 370,1500 370,1530 388,1560 385,1589 327,1592 303,1563 318,1515 298,1492 270,1430z"/>
          <path fill="#d1cf6c" d="M-117,1335 -89,1277 -95,1244 -37,1238 14,1251 20,1235 70,1225 120,1250 180,1300 165,1340 150,1360 85,1385 100,1395 68,1422 50,1400 30,1375 5,1385 -42,1335z"/>
          <path fill="#d4dadc" d="M85,1390l30,-20 35,-8 -18,35 -30,5z"/>
          <path d="M-19,635 0,630 20,615 45,625 65,640 95,640 130,670 165,690 187,735 165,772 105,768 70,755 35,728 55,765 80,785 78,820 105,860 130,860 130,845 110,820 150,825 172,835 160,800 200,760 215,762 232,785 235,745 222,720 232,690 220,668 265,685 268,700 245,715 250,735 268,745 285,740 290,712 335,680 400,672 435,670 470,650 475,675 495,655 485,625 490,608 540,620 600,655 615,685 628,655 610,640 595,615 605,570 588,548 612,520 628,455 645,448 685,462 685,495 672,525 686,545 682,655 697,670 690,710 665,745 630,750 635,762 675,768 705,740 718,705 710,665 735,650 755,670 765,710 785,710 760,680 770,680 745,640 700,645 700,610 707,565 695,530 698,505 725,490 725,455 730,540 780,552 740,510 760,490 790,485 830,515 855,520 850,545 835,550 837,590 850,590 860,515 840,500 815,470 808,430 810,412 915,395 895,360 915,350 905,330 945,300 975,285 1050,262 1070,265 1105,235 1115,270 1105,230 1140,225 1155,235 1135,215 1137,180 1155,150 1185,133 1212,155 1190,180 1228,195 1230,222 1245,207 1298,207 1325,240 1338,270 1332,310 1300,345 1245,410 1225,425 1203,455 1235,455 1215,440 1245,435 1285,405 1275,400 1285,388 1305,390 1312,403 1330,390 1335,460 1345,465 1338,420 1345,410 1415,410 1420,435 1445,450 1480,452 1495,430 1495,408 1520,408 1555,420 1555,1240 1535,1215 1500,1195 1445,1205 1440,1215 1450,1235 1430,1270 1425,1285 1400,1297 1355,1283 1320,1300 1275,1308 1205,1275 1175,1285 1150,1250 1105,1235 1085,1258 1092,1290 1040,1292 1010,1272 985,1270 950,1298 915,1308 880,1290 860,1265 815,1262 800,1262 775,1215 745,1180 700,1195 685,1180 660,1172 645,1142 625,1142 610,1158 560,1165 520,1180 500,1180 515,1205 500,1210 498,1230 487,1235 507,1268 480,1273 450,1258 430,1257 400,1272 375,1248 335,1245 300,1275 300,1290 280,1280 268,1325 290,1350 305,1380 275,1415 288,1455 298,1492 280,1485 255,1462 170,1442 118,1405 150,1360 165,1330 165,1298 130,1278 95,1278 75,1255 70,1230 28,1225 47,1193 19,1134 -20,1121 -33,1082 -33,1018 9,995 -9,972 30,897 5,865 -5,804 2,706z"/>
          <path d="M615,192 622,205 620,228 580,265 510,302 490,330 470,340 450,380 435,400 430,425 410,470 410,500 440,568 405,570 375,545 350,525 348,505 365,490 365,460 390,425 388,400 412,365 418,318 470,265 500,243 525,245 578,220 580,205zM1035,11 1115,11 1112,42 1055,32zM1140,11 1160,30 1180,20 1205,72 1195,85 1118,115 1110,108 1125,60zM460,582 485,600 488,612 465,600zM305,628 325,640 318,655 298,655zM652,418l12,22 -20,0zM1305,370l12,-12 12,8 -12,14zM370,660l15,-5 -5,25 -12,0zM755,480l15,-12 0,15zM785,440l6,15 -8,5zM-10,575l28,5 -10,15 -18,0zM110,830l10,-18 14,12 -12,10z"/>
          <path fill="none" d="M370,425l50,8M410,380l25,20M425,350l35,10M395,405l30,10M365,460l50,-5M410,320l35,10M1020,215l25,0M1055,210l25,0M940,185l15,-12M1045,190l15,-10M830,265h20M832,295v12M840,380h20M735,415l10,12M715,440v12M1225,88l15,12M1235,160v8M995,19h8M900,345l20,10M1010,260l50,-10M1315,215l15,25M387,652h25M5,615l35,10"/>
          <path fill="none" d="M915,1308 970,1350 975,1408 1020,1410 1060,1460 1145,1465 1200,1488 1230,1472 1280,1465 1308,1435 1308,1410 1345,1413 1400,1375 1438,1370 1412,1338 1370,1338 1382,1297M915,1308 890,1330 885,1365 850,1360 840,1405 803,1412 815,1450 800,1470 765,1475 705,1455 655,1470 620,1505 590,1490 565,1440 515,1440 465,1398 418,1408 418,1490 370,1480M418,1495 440,1480 465,1462 500,1500 515,1530 590,1568M620,1505 610,1530M800,1470 770,1498 715,1515 700,1540M185,1455l45,25 10,20 50,-5M225,1490l25,35 10,25 20,-10M655,1480l35,25 -60,18"/>
          <path fill="#fafcf8" stroke="none" d="M527,1385l20,-6 -2,14 -16,4z"/>
          <g stroke="none" fill="#f7f900"><path d="M1120,340l25,8 30,-5 20,-22 2,12 -22,15 -30,8 -5,35 -8,-30zM1275,1135l-15,65 -40,42 -32,3 30,-12 25,-35 18,-60zM5,950l25,-5 18,22 -12,20 -12,10zM80,920l15,10 8,30 -18,-10zM130,1030l14,15 -4,12zM300,1160l15,-18 -5,20zM1285,890h25l-10,18z"/></g>
        </g>
        <!-- Africa and the Middle East -->
        <g transform="translate(1260 1200) scale(.333333)">
          <path fill="#fafcf8" stroke="none" d="M1100,812 1100,720 1205,652 1125,620 1130,600 1160,608 1262,585 1265,610 1240,680 1190,745zM1205,650l15,-40z"/>
          <path fill="#fafcf8" d="M145,412 160,370 205,310 245,305 245,330 190,345 190,380z"/>
          <path fill="#d1cf6c" d="M845,35 880,25 930,20 960,8 1020,5 1060,15 1100,15 1130,20 1145,60 1150,100 1110,100 1060,115 1005,112 970,125 940,115 900,125 870,110 855,75zM360,150 415,118 540,112 535,140 520,175 550,205 555,330 595,375 510,425 490,450 460,458 430,435 245,305 245,265 330,240 330,225 372,210zM540,112 575,100 580,145 572,165 590,195 558,240 550,210 520,175 535,150zM595,190 655,210 660,225 700,230 718,245 735,235 738,210 765,195 818,218 820,440 800,442 665,378 635,390 560,345 553,245zM820,222 890,235 930,222 970,225 975,290 950,255 1000,360 1005,405 820,403z"/>
          <path fill="#d1cf6c" d="M590,750 635,760 628,780 640,800 635,828 600,825 590,850 570,845 545,800zM758,1108 820,1100 845,1140 887,1178 825,1245 790,1240 770,1262 748,1260 735,1230 738,1172 752,1170zM678,1300 735,1295 735,1240 748,1262 770,1262 790,1240 825,1245 887,1178 930,1180 940,1255 955,1262 910,1350 858,1398 820,1412 770,1405 728,1422 705,1405 705,1355zM1010,165 1015,185 1008,205 1055,190 1060,210 1030,220 1030,245 990,265zM1345,350 1410,395 1375,455 1335,495 1297,498 1285,460 1330,440 1340,390z"/>
          <path fill="#a3a4a1" d="M300,130 310,145 350,142 362,155 372,210 330,225 330,240 290,262 255,262 243,275 243,300 205,310 180,345 140,408 108,412 145,355 150,320 228,262 228,215 240,190 280,170zM245,310 305,352 282,355 300,515 195,520 155,500 115,500 118,425 108,415 170,412 175,390 190,375 190,328 243,328zM1010,112 1060,118 1100,108 1095,165 1055,182 1020,203 1008,185zM1100,108 1125,100 1150,105 1155,120 1183,140 1170,170 1185,200 1210,222 1218,245 1190,265 1155,265 1060,205 1055,182 1095,165zM345,608 390,600 403,650 405,690 365,705 345,700zM440,672 445,620 455,570 490,548 510,568 620,558 640,580 600,670 545,705 510,712 480,680zM640,590 635,625 660,660 645,690 668,730 665,755 560,748 560,720 545,705 560,690 600,670zM560,755h22v14h-22zM668,735 710,730 700,805 672,818 670,850 645,870 600,870 590,850 600,825 638,828 640,795 630,760 665,755zM978,718 1050,728 1100,722 1100,812 1062,862 970,805 990,760zM920,815 970,808 1060,865 1055,895 1068,905 1065,940 1080,970 1030,990 985,990 960,960 910,920 898,890 900,865zM605,892 672,890 698,925 725,925 730,910 765,912 770,975 802,980 800,1010 770,1012 770,1072 790,1095 610,1085 595,1090 610,1015 628,995 618,935zM595,1092 720,1090 820,1100 758,1108 752,1170 738,1172 735,1295 705,1305 672,1298 648,1250 640,1175zM770,1012 802,1010 802,980 830,990 880,1000 900,1020 905,1000 880,975 880,940 915,932 968,962 950,1030 910,1055 875,1070 850,1098 790,1095 770,1075zM830,1100 850,1100 910,1060 958,1078 955,1130 930,1178 890,1175 840,1130zM922,1250 940,1250 935,1272 922,1265zM1235,1000 1255,1050 1240,1060 1238,1105 1205,1210 1185,1237 1145,1230 1132,1175 1155,1135 1145,1105 1150,1070 1190,1060 1215,1035z"/>
          <path fill="#7777d2" d="M282,355 305,352 430,435 465,460 465,510 450,525 355,540 325,570 298,612 255,615 235,578 195,575 188,535 200,520 302,515zM465,458 510,430 595,375 635,388 650,390 662,430 658,495 622,540 622,555 515,568 490,548 440,575 415,565 398,540 450,525 465,505zM650,388 665,376 800,442 800,520 780,530 770,565 785,600 765,605 735,640 690,658 655,660 632,622 645,595 622,545 658,495 660,425zM820,405 1022,405 1030,450 1048,480 1025,510 1010,570 975,620 950,585 935,615 835,610 810,630 795,630 770,570 785,530 800,520 802,445 820,440z"/>
          <path fill="#7777d2" d="M1048,480 1065,520 1130,580 1120,600 1145,635 1205,652 1160,705 1105,720 1050,725 1005,710 965,655 975,620 1015,555 1025,510zM800,635 835,610 850,625 935,620 950,585 975,620 962,655 1000,705 975,720 910,722 860,700zM155,500 190,540 195,575 110,570 102,540 120,505zM110,575 235,578 260,615 345,605 343,692 262,715 195,665 165,625 135,598zM298,612 340,565 398,540 415,565 440,580 400,600 345,605 320,620zM405,605 440,580 455,590 440,625 438,680 408,682z"/>
          <path fill="#7777d2" d="M718,700 770,715 860,700 905,715 920,745 900,800 885,840 895,890 910,920 880,940 880,1000 835,990 802,975 770,975 765,912 730,910 722,925 698,925 672,888 605,882 645,868 670,850 672,818 700,805 708,740zM918,730 978,720 990,760 970,805 900,810 900,780zM890,812 912,812 912,840 900,865 888,835zM962,952 975,965 985,990 1035,990 1080,975 1088,1045 1065,1080 1025,1100 985,1135 998,1175 995,1215 945,1258 935,1180 958,1130 958,1078 915,1052 960,1030 955,985zM1130,485 1195,492 1225,465 1285,460 1297,498 1220,545 1150,570 1125,530z"/>
          <path fill="#7777d2" d="M857,1318 880,1300 893,1315 872,1335z"/>
          <path fill="#484bff" d="M645,680 660,662 700,655 735,635 765,605 780,605 800,635 857,697 800,702 770,715 715,700 705,728 668,738 645,700z"/>
          <path fill="#feff00" d="M990,280 1040,245 1030,220 1075,212 1155,265 1190,270 1205,250 1222,290 1250,325 1285,385 1340,390 1330,440 1225,465 1195,492 1130,485 1120,500 1090,450 1055,415 1055,375zM1280,365 1325,370 1355,330 1340,390 1290,385zM980,215l15,-30 2,25 -8,40zM1262,330l10,0 -2,22 -8,-5z"/>
          <path fill="none" d="M188,620 215,660M165,630l30,-10 20,45M215,665 265,690 262,715M230,645l25,10M260,615l-5,35 -25,0M110,565l85,8M105,555l50,5M120,580l40,5 -25,12M425,600v80M1015,540 1060,535 1125,580M890,840l20,-5M980,1000l25,45 -10,35 -20,-20 0,-20M940,525"/>
          <g fill="none"><path d="M100,192l15,-4M85,280l4,12M108,292l10,-4M125,290l8,-10M152,285l18,-15M1305,573h10M1340,862h8M1185,950v5M1135,990l8,8M1150,1000l15,8M820,70l20,30M825,55l25,10M825,105l20,10M840,80l15,15M945,155l25,-6M540,725l4,10M500,787h6M1065,870l5,20"/></g>
        </g>
        <!-- labels -->
        <g class="font-['Inter',sans-serif] text-[27px] font-bold tracking-normal" stroke="none">
          <g fill="#1e4650" fill-opacity=".11"><text x="791" y="1148" textLength="104" lengthAdjust="spacingAndGlyphs">NORTH</text><text x="773" y="1182" textLength="139" lengthAdjust="spacingAndGlyphs">AMERICA</text><text x="1388" y="1186" textLength="121" lengthAdjust="spacingAndGlyphs">EUROPE</text></g>
          <g fill="#647a1e" fill-opacity=".3"><text x="1843" y="1168" textLength="68" lengthAdjust="spacingAndGlyphs">ASIA</text><text x="993" y="1534" textLength="102" lengthAdjust="spacingAndGlyphs">SOUTH</text><text x="975" y="1568" textLength="139" lengthAdjust="spacingAndGlyphs">AMERICA</text></g>
          <text x="1487" y="1475" textLength="106" lengthAdjust="spacingAndGlyphs" fill="#3c3ca0" fill-opacity=".4">AFRICA</text>
          <g fill="#b3bcc8" font-style="italic"><text x="1108" y="1380" textLength="129" lengthAdjust="spacingAndGlyphs">Atlantic</text><text x="1123" y="1410" textLength="101" lengthAdjust="spacingAndGlyphs">Ocean</text><text x="644" y="1462" textLength="113" lengthAdjust="spacingAndGlyphs">Pacific</text><text x="654" y="1493" textLength="101" lengthAdjust="spacingAndGlyphs">Ocean</text><text x="1738" y="1517" textLength="103" lengthAdjust="spacingAndGlyphs">Indian</text></g>
        </g>
      </svg>
      <!-- map controls -->
      <div class="absolute left-5 top-[20px] flex flex-col gap-[19px]">
        <div class="w-[52px] h-[107px] rounded-lg overflow-hidden bg-white shadow-[0_2px_10px_rgba(0,0,0,.5)]">
          <div class="h-[53px] border-b-2 border-[#cdcfcc]"><svg class="size-[52px]" viewBox="0 0 52 52"><path d="M17 28h20M27 18v20" stroke="#000" stroke-width="4"/></svg></div>
          <div class="h-[54px] bg-[#f5f6f3]"><svg class="size-[52px]" viewBox="0 0 52 52"><path d="M18 28h18" stroke="#bcbebb" stroke-width="4.500"/></svg></div>
        </div>
        <div class="size-[52px] rounded-lg bg-white shadow-[0_2px_10px_rgba(0,0,0,.5)]"><svg class="size-[52px]" viewBox="0 0 52 52" fill="none" stroke="#111" stroke-width="2.400"><circle cx="28" cy="26.500" r="10"/><path d="M12 26.500h13M31 26.500h13M28 10.500v13M28 29.500v13"/></svg></div>
      </div>
      <div class="absolute left-[1052px] top-[832px] w-[352px] h-[140px] rounded-xl border-2 border-[#858783] bg-[#ece6e4]/90 shadow-[0_0_20px_rgba(0,0,0,.35)] px-6 pt-[22px] font-['Liberation_Sans',sans-serif] font-bold text-[24px] tracking-normal text-[#454643]">
        <div class="flex justify-between w-[300px]"><span>0.352</span><span>0.949</span></div>
        <div class="mt-[8px] flex h-11 w-[300px]"><i class="flex-1 bg-[#000dff]"></i><i class="flex-1 bg-[#3a42c6]"></i><i class="flex-1 bg-[#80827f]"></i><i class="flex-1 bg-[#c2c01c]"></i><i class="flex-1 bg-[#feff00]"></i></div>
      </div>
      <div class="absolute right-0 bottom-0 h-8 w-[758px] bg-[#eff4f6] text-right pr-[10px] font-['Liberation_Sans',sans-serif] text-[22px] leading-[34px] text-[#6b6d6a] tracking-[0.03px]">Orange Data Mining | Leaflet | Natural Earth | © OpenStreetMap © CartoDB</div>
    </main>
  </div>
  <footer class="flex-1 border-t-2 border-[#707270] bg-linear-to-b from-[#e6e8e5] to-[#b1b3b0] flex items-start pt-[8px] pl-[10px] text-[#262725]">
    <svg class="w-5 h-[29px]"><use href="#help"/></svg>
    <svg class="ml-[21px] mt-px w-[27px] h-[27px]" viewBox="0 0 27 27" fill="none" stroke="currentColor" stroke-width="2"><path d="M1.500 1.500H20l5.500 5.500v18.500h-24zM6.500 1.500v7H16v-7M6.500 25.500V14H21v11.500"/></svg>
  </footer>
</section>
</body>
</html>
